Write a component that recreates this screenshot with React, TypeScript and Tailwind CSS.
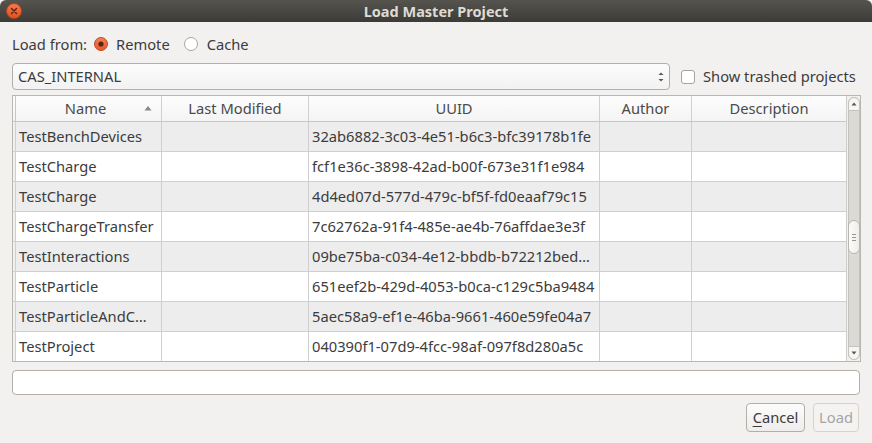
import React from "react";

const rows: [string, string][] = [
  ["TestBenchDevices", "32ab6882-3c03-4e51-b6c3-bfc39178b1fe"],
  ["TestCharge", "fcf1e36c-3898-42ad-b00f-673e31f1e984"],
  ["TestCharge", "4d4ed07d-577d-479c-bf5f-fd0eaaf79c15"],
  ["TestChargeTransfer", "7c62762a-91f4-485e-ae4b-76affdae3e3f"],
  ["TestInteractions", "09be75ba-c034-4e12-bbdb-b72212bed…"],
  ["TestParticle", "651eef2b-429d-4053-b0ca-c129c5ba9484"],
  ["TestParticleAndC…", "5aec58a9-ef1e-46ba-9661-460e59fe04a7"],
  ["TestProject", "040390f1-07d9-4fcc-98af-097f8d280a5c"],
];

function Radio({ checked }: { checked: boolean }) {
  return checked ? (
    <svg width="14" height="14" viewBox="0 0 14 14">
      <defs>
        <linearGradient id="rg" x1="0" y1="0" x2="0" y2="1">
          <stop offset="0" stopColor="#f48058" />
          <stop offset="1" stopColor="#e05a2b" />
        </linearGradient>
      </defs>
      <circle cx="7" cy="7" r="6.5" fill="url(#rg)" stroke="#c44a1f" />
      <circle cx="7" cy="7" r="2.6" fill="#5a2412" />
    </svg>
  ) : (
    <svg width="14" height="14" viewBox="0 0 14 14">
      <circle cx="7" cy="7" r="6.5" fill="#ffffff" stroke="#a8a49c" />
    </svg>
  );
}

export default function App() {
  const font = { fontFamily: '"Noto Sans", "Open Sans", sans-serif' };
  return (
    <div
      className="w-[872px] h-[443px] bg-[#f2f1f0] flex flex-col overflow-hidden text-[14.7px] text-[#3c3c3c]"
      style={font}
    >
      {/* Title bar */}
      <div className="relative h-[22px] shrink-0 rounded-t-[6px] bg-gradient-to-b from-[#55544f] to-[#3c3b37] flex items-center justify-center">
        <div className="absolute left-[6px] top-[3px] w-[16px] h-[16px] rounded-full bg-gradient-to-b from-[#f37a4f] to-[#e2501c] border border-[#b9441a] flex items-center justify-center">
          <svg width="8" height="8" viewBox="0 0 8 8">
            <path d="M1.5 1.5 L6.5 6.5 M6.5 1.5 L1.5 6.5" stroke="#5a2010" strokeWidth="1.4" strokeLinecap="round" />
          </svg>
        </div>
        <span className="font-bold text-[14.5px] text-[#dfdbd2] leading-none">Load Master Project</span>
      </div>

      <div className="flex flex-col px-[12px] pt-[13px]">
        {/* Load from */}
        <div className="flex items-center h-[18px]">
          <span>Load from:</span>
          <span className="ml-[7px] flex items-center"><Radio checked /></span>
          <span className="ml-[8px]">Remote</span>
          <span className="ml-[14px] flex items-center"><Radio checked={false} /></span>
          <span className="ml-[9px]">Cache</span>
        </div>

        {/* Combo row */}
        <div className="flex items-center mt-[10px] h-[27px]">
          <div className="w-[658px] h-[27px] rounded-[4px] border border-[#b3afa8] bg-gradient-to-b from-[#fcfcfc] to-[#f2f2f2] flex items-center pl-[5px] pr-[4px] justify-between">
            <span>CAS_INTERNAL</span>
            <svg width="8" height="14" viewBox="0 0 8 14">
              <path d="M1.5 5 L4 2.5 L6.5 5 Z" fill="#555" />
              <path d="M1.5 9 L4 11.5 L6.5 9 Z" fill="#555" />
            </svg>
          </div>
          <div className="ml-[11px] w-[14px] h-[14px] rounded-[3px] border border-[#a8a49c] bg-white" />
          <span className="ml-[8px]">Show trashed projects</span>
        </div>

        {/* Table */}
        <div className="mt-[5px] w-[849px] h-[267px] border border-[#bab6b0] bg-white flex overflow-hidden">
          <div className="flex flex-col w-[834px]">
            {/* Header */}
            <div className="flex h-[26px] shrink-0 bg-gradient-to-b from-[#fdfdfd] to-[#f4f4f4] border-b border-[#c8c6c2] text-[#4a4a4a]">
              <div className="w-[3px] border-r border-[#c8c6c2]" />
              <div className="w-[146px] border-r border-[#d2d0cc] relative flex items-center justify-center">
                <span className="-ml-[6px]">Name</span>
                <svg className="absolute right-[9px] top-[9px]" width="8" height="6" viewBox="0 0 8 6">
                  <path d="M0.5 5.5 L4 1 L7.5 5.5 Z" fill="#888" />
                </svg>
              </div>
              <div className="w-[147px] border-r border-[#d2d0cc] flex items-center justify-center">Last Modified</div>
              <div className="w-[291px] border-r border-[#d2d0cc] flex items-center justify-center">UUID</div>
              <div className="w-[92px] border-r border-[#d2d0cc] flex items-center justify-center">Author</div>
              <div className="flex-1 flex items-center justify-center">Description</div>
            </div>
            {rows.map(([name, uuid], i) => (
              <div
                key={i}
                className={`flex h-[30px] shrink-0 border-b border-[#cfcfcf] ${i % 2 === 0 ? "bg-[#ededed]" : "bg-white"}`}
              >
                <div className="w-[3px] border-r border-[#cfcfcf] bg-[#f2f1f0]" />
                <div className="w-[146px] border-r border-[#cfcfcf] flex items-center pl-[3px] whitespace-nowrap overflow-hidden">{name}</div>
                <div className="w-[147px] border-r border-[#cfcfcf]" />
                <div className="w-[291px] border-r border-[#cfcfcf] flex items-center pl-[3px] whitespace-nowrap overflow-hidden">{uuid}</div>
                <div className="w-[92px] border-r border-[#cfcfcf]" />
                <div className="flex-1" />
              </div>
            ))}
          </div>
          {/* Scrollbar */}
          <div className="w-[14px] border-l border-[#d0cec9] bg-[#f2f1f0] relative">
            <div className="absolute left-[1px] top-[1px] w-[12px] h-[263px] rounded-[6px] bg-[#dcdad6] border border-[#c4c2bd]" />
            <div className="absolute left-[1px] top-[1px] w-[12px] h-[14px] rounded-t-[6px] bg-[#f6f6f5] border border-[#c4c2bd] flex items-center justify-center">
              <svg width="6" height="4" viewBox="0 0 6 4"><path d="M0.5 3.5 L3 0.5 L5.5 3.5 Z" fill="#555" /></svg>
            </div>
            <div className="absolute left-[1px] bottom-[1px] w-[12px] h-[14px] rounded-b-[6px] bg-[#f6f6f5] border border-[#c4c2bd] flex items-center justify-center">
              <svg width="6" height="4" viewBox="0 0 6 4"><path d="M0.5 0.5 L3 3.5 L5.5 0.5 Z" fill="#555" /></svg>
            </div>
            <div className="absolute left-[1px] top-[124px] w-[12px] h-[34px] rounded-[6px] bg-gradient-to-r from-[#fbfbfb] to-[#eeeeec] border border-[#b8b6b1] flex flex-col items-center justify-center gap-[2px]">
              <div className="w-[4px] h-px bg-[#9a9893]" />
              <div className="w-[4px] h-px bg-[#9a9893]" />
              <div className="w-[4px] h-px bg-[#9a9893]" />
            </div>
          </div>
        </div>

        {/* Text input */}
        <div className="mt-[8px] w-[848px] h-[25px] rounded-[4px] border border-[#b3afa8] bg-white" />

        {/* Buttons */}
        <div className="mt-[8px] flex justify-end gap-[8px] pr-[1px]">
          <div className="w-[59px] h-[29px] rounded-[4px] border border-[#b3afa8] bg-gradient-to-b from-[#fcfcfc] to-[#eeedeb] flex items-center justify-center">
            <span><span className="underline underline-offset-[3px]">C</span>ancel</span>
          </div>
          <div className="w-[46px] h-[29px] rounded-[4px] border border-[#d6d3ce] bg-[#f4f3f2] flex items-center justify-center text-[#a7a5a1]">
            Load
          </div>
        </div>
      </div>
    </div>
  );
}
